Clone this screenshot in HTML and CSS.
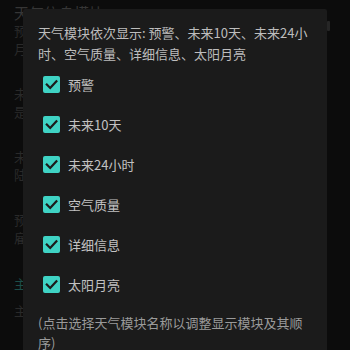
FILE: index.html
```html
<!DOCTYPE html>
<html lang="zh">
<head>
<meta charset="utf-8">
<link rel="stylesheet" href="styles.css">
</head>
<body>
<div class="screen">
  <div class="bg-list">
    <div class="bg-title">天气信息模块</div>
    <div class="bg-sub">预警、未来10天、未来24小时</div>
    <div class="bg-sub">月亮</div>
    <div class="bg-item">
      <div class="bg-sub">未来天气</div>
      <div class="bg-sub">是否显示</div>
    </div>
    <div class="bg-item">
      <div class="bg-sub">未来降水</div>
      <div class="bg-sub">陆地</div>
    </div>
    <div class="bg-item">
      <div class="bg-sub">预报来源</div>
      <div class="bg-sub">雇用</div>
    </div>
    <div class="bg-head">主题</div>
    <div class="bg-sub bg-last">主题设置</div>
  </div>
  <div class="scroll-thumb"></div>

  <div class="dialog">
    <p class="dialog-title">天气模块依次显示: 预警、未来10天、未来24小时、空气质量、详细信息、太阳月亮</p>
    <ul class="check-list">
      <li class="check-row"><span class="box"><svg viewBox="0 0 17 17" width="17" height="17"><polyline points="3.8,8.6 7.2,12 13.4,5.2" fill="none" stroke="#1c1c1c" stroke-width="2.2" stroke-linecap="square"/></svg></span><span class="label">预警</span></li>
      <li class="check-row"><span class="box"><svg viewBox="0 0 17 17" width="17" height="17"><polyline points="3.8,8.6 7.2,12 13.4,5.2" fill="none" stroke="#1c1c1c" stroke-width="2.2" stroke-linecap="square"/></svg></span><span class="label">未来10天</span></li>
      <li class="check-row"><span class="box"><svg viewBox="0 0 17 17" width="17" height="17"><polyline points="3.8,8.6 7.2,12 13.4,5.2" fill="none" stroke="#1c1c1c" stroke-width="2.2" stroke-linecap="square"/></svg></span><span class="label">未来24小时</span></li>
      <li class="check-row"><span class="box"><svg viewBox="0 0 17 17" width="17" height="17"><polyline points="3.8,8.6 7.2,12 13.4,5.2" fill="none" stroke="#1c1c1c" stroke-width="2.2" stroke-linecap="square"/></svg></span><span class="label">空气质量</span></li>
      <li class="check-row"><span class="box"><svg viewBox="0 0 17 17" width="17" height="17"><polyline points="3.8,8.6 7.2,12 13.4,5.2" fill="none" stroke="#1c1c1c" stroke-width="2.2" stroke-linecap="square"/></svg></span><span class="label">详细信息</span></li>
      <li class="check-row"><span class="box"><svg viewBox="0 0 17 17" width="17" height="17"><polyline points="3.8,8.6 7.2,12 13.4,5.2" fill="none" stroke="#1c1c1c" stroke-width="2.2" stroke-linecap="square"/></svg></span><span class="label">太阳月亮</span></li>
    </ul>
    <p class="dialog-note">(点击选择天气模块名称以调整显示模块及其顺序)</p>
  </div>
</div>
</body>
</html>
```
FILE: styles.css
```css
html, body {
  margin: 0;
  padding: 0;
  background: #0c0c0c;
}
body {
  font-family: "Noto Sans CJK SC", "Noto Sans", sans-serif;
}
.screen {
  position: relative;
  width: 350px;
  height: 350px;
  overflow: hidden;
  background: #0c0c0c;
}
.bg-list {
  padding: 4px 0 0 14px;
}
.bg-title {
  font-size: 15px;
  line-height: 18px;
  color: #363636;
  white-space: nowrap;
}
.bg-sub {
  font-size: 13px;
  line-height: 18px;
  color: #2a2a2a;
  white-space: nowrap;
}
.bg-item {
  margin-top: 27px;
}
.bg-head {
  margin-top: 28px;
  font-size: 13px;
  line-height: 18px;
  color: #1d4e49;
}
.bg-last {
  margin-top: 9px;
}
.scroll-thumb {
  position: absolute;
  left: 327px;
  top: 21px;
  width: 3px;
  height: 10px;
  background: #262626;
  border-radius: 1px;
}
.dialog {
  position: absolute;
  left: 23px;
  top: 9px;
  width: 304px;
  height: 360px;
  background: #1b1b1b;
  border-radius: 2px;
  box-sizing: border-box;
  padding: 13px 12px 0 15px;
}
.dialog-title {
  margin: 0;
  padding-right: 3px;
  font-size: 13px;
  line-height: 21px;
  color: #bdbdbd;
}
.check-list {
  list-style: none;
  margin: 0;
  padding: 0;
}
.check-row {
  height: 40px;
  display: flex;
  align-items: center;
  padding-left: 5px;
}
.box {
  width: 17px;
  height: 17px;
  background: #3fd3c4;
  border-radius: 2px;
  display: flex;
  flex-shrink: 0;
}
.label {
  margin-left: 8px;
  font-size: 13px;
  color: #c2c2c2;
}
.dialog-note {
  margin: 9px 0 0;
  font-size: 13px;
  line-height: 20px;
  color: #9a9a9a;
}
```
